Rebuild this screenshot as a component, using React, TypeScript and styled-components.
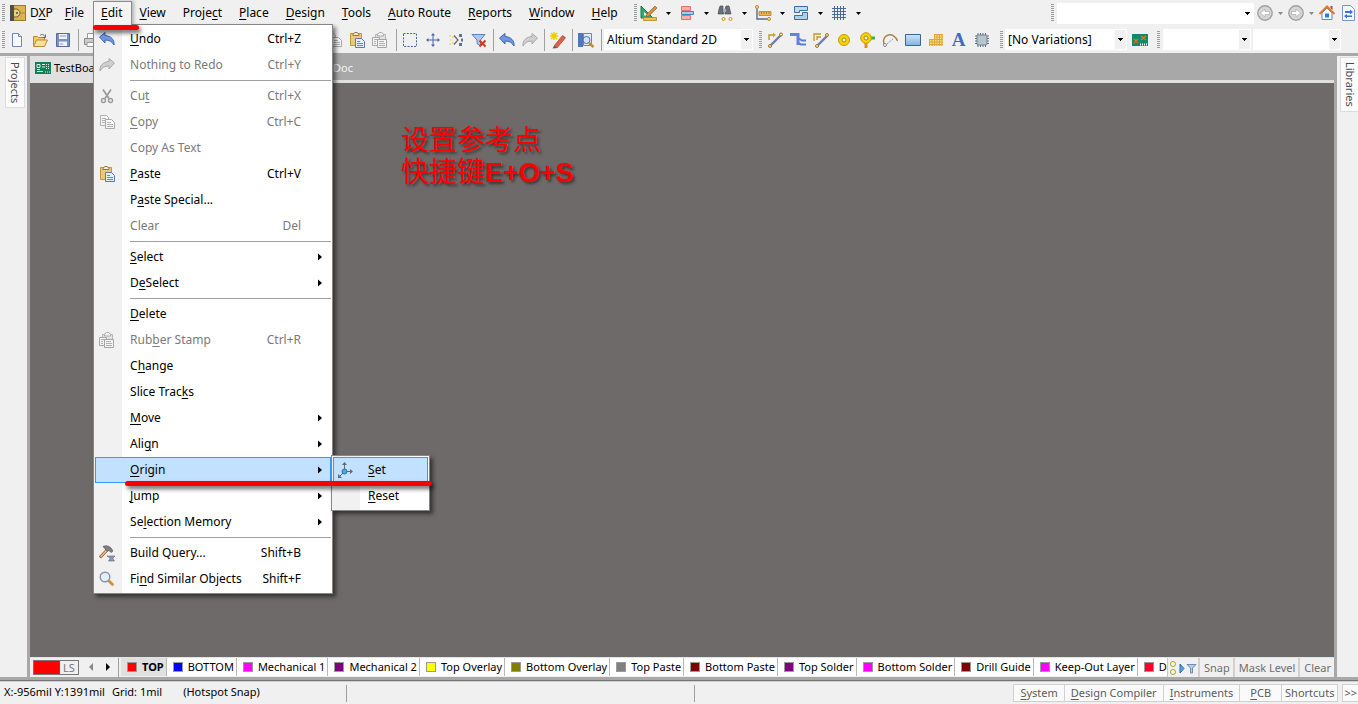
import React from 'react';
import styled, { createGlobalStyle, css } from 'styled-components';

const Global = createGlobalStyle`
  *, *::before, *::after { box-sizing: border-box; }
  html, body { margin: 0; padding: 0; }
  body { font-family: "Noto Sans", "Noto Sans CJK SC", sans-serif; font-size: 12px; line-height: 16px; color: #000; background: #f0f0f0; overflow: hidden; }
  button, input, select { font: inherit; color: inherit; margin: 0; padding: 0; border: 0; background: none; border-radius: 0; outline: 0; }
  ul { list-style: none; margin: 0; padding: 0; }
  u { text-underline-offset: 2px; text-decoration-thickness: 1px; }
`;

/* ---------- shell ---------- */

const Shell = styled.div`
  display: flex;
  flex-direction: column;
  min-height: 100vh;
  background: #f0f0f0;
`;

const Bar = styled.div<{ $h: number }>`
  display: flex;
  align-items: center;
  height: ${p => p.$h}px;
  flex: none;
  white-space: nowrap;
`;

const Grip = styled.span<{ $left?: number; $right?: number }>`
  flex: none;
  width: 3px;
  height: 18px;
  margin-left: ${p => p.$left ?? 0}px;
  margin-right: ${p => p.$right ?? 0}px;
  background: repeating-linear-gradient(#9c9c9c 0 1px, #f0f0f0 1px 2px);
`;

const Spacer = styled.span`
  flex: 1;
`;

const Divider = styled.span<{ $left?: number; $right?: number }>`
  flex: none;
  width: 1px;
  height: 22px;
  margin-left: ${p => p.$left ?? 5}px;
  margin-right: ${p => p.$right ?? 4}px;
  background: #a0a0a0;
`;

const IconButton = styled.button<{ $w?: number }>`
  flex: none;
  display: flex;
  align-items: center;
  justify-content: center;
  width: ${p => p.$w ?? 23}px;
  height: 22px;
`;

const ArrowButton = styled(IconButton)`
  width: 15px;
`;

const Svg = styled.svg`
  flex: none;
  display: block;
  width: 16px;
  height: 16px;
  overflow: visible;
`;

/* ---------- menu bar ---------- */

const MenuList = styled.ul`
  display: flex;
`;

const MenuEntry = styled.li`
  position: relative;
`;

const MenuButton = styled.button<{ $open?: boolean; $tight?: boolean }>`
  height: 24px;
  padding: 0 8px 2px 7px;
  border: 1px solid transparent;
  border-bottom: 0;
  ${p => p.$tight && css`padding-left: 3px; padding-right: 3px;`}
  ${p => p.$open && css`
    position: relative;
    z-index: 3;
    border-color: #8c8c8c;
    background: #f4f4f4;
    box-shadow: 2px 0 3px rgba(0, 0, 0, 0.25);
  `}
`;

const Popup = styled.ul<{ $w: number }>`
  position: absolute;
  z-index: 2;
  width: ${p => p.$w}px;
  padding: 1px;
  border: 1px solid #868686;
  background: linear-gradient(to right, #f1f1f1 28px, #fff 28px);
  box-shadow: 3px 3px 4px rgba(0, 0, 0, 0.5);
`;

const EditPopup = styled(Popup)`
  top: 23px;
  left: 0;
`;

const SubPopup = styled(Popup)`
  top: -2px;
  left: 236px;
`;

const ItemRow = styled.li`
  position: relative;
`;

const ItemButton = styled.button<{ $on?: boolean; $dim?: boolean }>`
  display: grid;
  grid-template-columns: 24px 1fr auto 8px;
  align-items: center;
  width: 100%;
  height: 26px;
  padding: 0 4px 0 3px;
  border: 1px solid ${p => (p.$on ? '#3399ff' : 'transparent')};
  background: ${p => (p.$on ? '#c2e0ff' : 'transparent')};
  color: ${p => (p.$dim ? '#7a7a7a' : '#000')};
  text-align: left;
  white-space: nowrap;
`;

const ItemText = styled.span`
  padding-left: 7px;
`;

const Shortcut = styled.span`
  padding-right: 17px;
`;

const Rule = styled.li`
  height: 5px;
  padding: 2px 0 0 35px;
  &::before { content: ''; display: block; height: 1px; background: #a0a0a0; }
`;

const Stroke = styled.span`
  position: absolute;
  z-index: 5;
  height: 5px;
  border-radius: 3px;
  background: #f60000;
  box-shadow: 2px 3px 4px rgba(0, 0, 0, 0.6);
`;

const EditStroke = styled(Stroke)`
  left: 0;
  top: 24px;
  width: 46px;
`;

const OriginStroke = styled(Stroke)`
  left: 30px;
  top: 24px;
  width: 307px;
`;

/* ---------- combos ---------- */

const Combo = styled.span<{ $w: number; $right?: number; $plain?: boolean }>`
  flex: none;
  display: flex;
  width: ${p => p.$w}px;
  height: 21px;
  margin-right: ${p => p.$right ?? 0}px;
  border: 1px solid #fff;
  background: #fff;
  select, input {
    flex: 1;
    min-width: 0;
    padding-left: 2px;
    appearance: none;
  }
  svg {
    width: 11px;
    height: 19px;
    background: ${p => (p.$plain ? '#fff' : '#f0f0f0')};
  }
`;

/* ---------- workspace ---------- */

const Workspace = styled.main`
  flex: 1;
  display: flex;
  padding: 3px 0;
  background: #a8a8a8;
  border-bottom: 1px solid #757575;
`;

const SidePanel = styled.aside<{ $side: 'left' | 'right' }>`
  flex: none;
  width: ${p => (p.$side === 'left' ? 27 : 21)}px;
  margin: ${p => (p.$side === 'left' ? '0 3px 0 0' : '0 0 0 3px')};
  padding: 1px 0 0 ${p => (p.$side === 'left' ? 5 : 3)}px;
  background: #f0f0f0;
`;

const SideTab = styled.button`
  width: 20px;
  padding: 4px 0;
  border: 1px solid #dcdcdc;
  background: #fcfcfc;
  color: #4a4a55;
  font-size: 11px;
  line-height: 16px;
  writing-mode: vertical-rl;
`;

const DocArea = styled.div`
  flex: 1;
  min-width: 0;
  display: flex;
  flex-direction: column;
`;

const DocTabs = styled.div`
  display: flex;
  height: 27px;
  border-bottom: 3px solid #e0e0e0;
  font-size: 11px;
`;

const DocTab = styled.button<{ $active?: boolean }>`
  display: flex;
  align-items: center;
  gap: 3px;
  padding: 0 5px;
  width: ${p => (p.$active ? 150 : 178)}px;
  justify-content: ${p => (p.$active ? 'flex-start' : 'flex-end')};
  background: ${p => (p.$active ? '#e0e0e0' : 'transparent')};
  color: ${p => (p.$active ? '#000' : '#f4f4f4')};
`;

const Canvas = styled.section`
  flex: 1;
  padding: 39px 0 0 371px;
  background: #6e6a69;
`;

const Note = styled.p`
  margin: 0;
  color: #ff0000;
  font-family: "Noto Sans CJK SC", sans-serif;
  font-size: 28px;
  line-height: 32px;
  text-shadow: 2px 2px 3px rgba(0, 0, 0, 0.5);
  strong { font-family: "Liberation Sans", sans-serif; font-size: 27px; }
`;

/* ---------- layer bar ---------- */

const LayerBar = styled.div`
  display: flex;
  height: 20px;
  border-top: 1px solid #e4e4e4;
  background: #f0f0f0;
  font-size: 11px;
  white-space: nowrap;
`;

const LayerSet = styled.button`
  display: flex;
  flex: none;
  width: 46px;
  height: 15px;
  margin: 2px 7px 0 3px;
  border: 1px solid #777;
  color: #777;
  line-height: 14px;
`;

const LayerSetColor = styled.span`
  width: 26px;
  height: 13px;
  background: #ff0000;
  border-right: 1px solid #555;
`;

const LayerSetName = styled.span`
  flex: 1;
  text-align: center;
`;

const LayerTabs = styled.div`
  flex: 1 1 0;
  min-width: 0;
  display: flex;
  overflow: hidden;
  margin-left: 2px;
  border-left: 1px solid #a0a0a0;
  padding-left: 2px;
`;

const LayerTab = styled.button<{ $active?: boolean }>`
  flex: none;
  display: flex;
  align-items: center;
  gap: 5px;
  height: 18px;
  padding: 0 2px 0 6px;
  border-right: 1px solid #b8b8b8;
  background: ${p => (p.$active ? '#e0e0e0' : '#fff')};
  font-weight: ${p => (p.$active ? 700 : 400)};
  &:last-child { flex: 1; border-right: 0; }
`;

const Swatch = styled.i<{ $c: string }>`
  width: 10px;
  height: 10px;
  border: 1px solid #9a9a9a;
  background: ${p => p.$c};
`;

const LayerAction = styled.button`
  flex: none;
  padding: 0 3px 0 4px;
  height: 19px;
  border-left: 2px solid #d4d0cc;
  color: #6e6e6e;
`;

const LayerTools = styled.div`
  flex: none;
  display: flex;
  align-items: center;
  width: 31px;
  border-left: 1px solid #c8c8c8;
`;

/* ---------- status bar ---------- */

const Status = styled.footer`
  flex: none;
  display: flex;
  align-items: center;
  height: 23px;
  padding-left: 4px;
  border-top: 1px solid #d0d0d0;
  font-size: 11px;
  white-space: nowrap;
  overflow: hidden;
`;

const StatusCell = styled.div<{ $w: number }>`
  flex: none;
  display: flex;
  align-items: center;
  width: ${p => p.$w}px;
  height: 17px;
  padding-bottom: 2px;
  border-right: 1px solid #a0a0a0;
`;

const StatusText = styled.span<{ $gap: number }>`
  margin-right: ${p => p.$gap}px;
`;

const PanelButton = styled.button<{ $pad?: number; $right?: number }>`
  flex: none;
  height: 18px;
  padding: 0 ${p => p.$pad ?? 6}px;
  margin-left: -1px;
  margin-right: ${p => p.$right ?? 0}px;
  border: 1px solid #d0d0d0;
  background: #fafafa;
  color: #5c5c5c;
`;

/* ---------- icons ---------- */

const Down = () => (
  <Svg viewBox="0 0 11 19"><path d="M3 8h5v1h-1v1h-1v1h-1v-1h-1v-1h-1z" /></Svg>
);
const DropGlyph = styled.svg`display: block; width: 5px; height: 3px;`;
const Drop = ({ c = '#000' }: { c?: string }) => (
  <DropGlyph viewBox="0 0 5 3"><path d="M0 0h5L2.500 3z" fill={c} /></DropGlyph>
);

const I: Record<string, React.ReactNode> = {
  dxp: <><rect x=".5" y=".5" width="15" height="15" fill="#dcb44e" stroke="#9a7a2c" /><path d="M0 0h4v16H0z" fill="#514c46" /><path d="M4 4h3l3 2.500v3L7 12H4" fill="#e9cf86" stroke="#6a5d40" /><circle cx="7" cy="8" r="1" fill="#514c46" /><path d="M10 8h6" stroke="#a98630" /></>,
  blank: <><path d="M3.500 1.500h6l3 3v10h-9z" fill="#f8fbff" stroke="#7088b4" /><path d="M9.500 1.500v3h3" fill="#d4e0f4" stroke="#7088b4" /></>,
  open: <><path d="M1.500 14V4.500h4l1 1h6V8" fill="#f2c869" stroke="#b98a3a" /><path d="M1.500 14.500L4.500 8h11l-3 6.500z" fill="#fbdf98" stroke="#b98a3a" /><path d="M8 3.500c2-2 4-1 4.500 1M13.500 2.500v3h-3" fill="none" stroke="#666" /></>,
  save: <><path d="M1.500 1.500h13v13h-13z" fill="#7d8fc9" stroke="#5a68a4" /><path d="M4 2h8v5H4zM4 9.500h8V14H4z" fill="#eef2fc" /><path d="M5 4h6M5 12h3" stroke="#8a96c4" /></>,
  print: <><path d="M4.500 6V1.500h7V6" fill="#fff" stroke="#999" /><path d="M1.500 6.500h13v6h-13z" fill="#ccc" stroke="#888" /><path d="M4 10.500h8v4H4z" fill="#fff" stroke="#999" /></>,
  copy: <><path d="M1.500 1.500h6l2 2v8h-8z" fill="#f4f4f4" stroke="#b0b0b0" /><path d="M3 4.500h4M3 6.500h4M3 8.500h3" stroke="#b0b0b0" /><path d="M6.500 5.500h6l3 3v6h-9z" fill="#f8f8f8" stroke="#a8a8a8" /><path d="M8 8.500h4M8 10.500h6M8 12.500h6" stroke="#b0b0b0" /></>,
  paste: <><path d="M1.500 1.500h11v12h-11z" fill="#edc879" stroke="#bf953f" /><path d="M4 3.500V2l2-1.500h2L10 2v1.500z" fill="#f5eec8" stroke="#8d7a45" /><path d="M6.500 6.500h6l3 3v6h-9z" fill="#e4eefb" stroke="#6078b0" /><path d="M8 9.500h3M8 11.500h6M8 13.500h6" stroke="#6a86c4" /></>,
  pasteGray: <><path d="M3.500 2.500h10v11h-10z" fill="#e2e2e2" stroke="#b4b4b4" /><path d="M5.500 4V2l2-1.500h2l2 1.500v2z" fill="#f4f4f4" stroke="#aaa" /><path d="M.5 5.500h7v8h-7z" fill="#f2f2f2" stroke="#a8a8a8" /><path d="M5.500 7.500h9v8h-9z" fill="#f4f4f4" stroke="#a4a4a4" /><path d="M7 9.500h5M7 11.500h6M7 13.500h6M2 7.500h4M2 9.500h2M2 11.500h2" stroke="#b0b0b0" /></>,
  select: <path d="M1.500 1.500h13v13h-13z" fill="none" stroke="#4a62a8" strokeDasharray="2 1.300" />,
  move: <><path d="M8 2v12M2 8h12" stroke="#4f66a6" /><path d="M8 1L6 3.500h4zM8 15l-2-2.500h4zM1 8l2.500-2v4zM15 8l-2.500-2v4z" fill="#4f66a6" /></>,
  deselect: <><path d="M1 3h2v2H1zM4 4h2v2H4zM1 11h2v2H1zM4 10h2v2H4zM2 7h2v2H2z" fill="#ece28c" /><path d="M6 3.500l4 4.500-4 4.500" fill="none" stroke="#6b6b6b" strokeWidth="1.300" /><path d="M11 2h3v3h-3zM13 6.500h2v3h-2zM11 11h3v3h-3z" fill="#5d7291" /></>,
  filter: <><path d="M1 2.500h13L9.500 8v6L6 11.500V8z" fill="#a9c8ee" stroke="#5f83b8" /><path d="M8.500 8.500l6 6M14.500 8.500l-6 6" stroke="#cc3a2b" strokeWidth="2" /></>,
  undo: <path d="M.5 6l5.500-4.500v3C12 5 15.500 8.500 15 14c-2-3.500-4.500-5-9-5v3z" fill="#6f97e2" stroke="#3f63ae" />,
  redo: <path d="M15.500 6L10 1.500v3C4 5 .5 8.500 1 14c2-3.500 4.500-5 9-5v3z" fill="#cfcfcf" stroke="#a8a8a8" />,
  wand: <><path d="M4 14L12.500 3.500l3 2.200L7 16z" fill="#e0604e" stroke="#a33b30" strokeWidth=".7" /><path d="M4 14l-1.500 2.500L7 16z" fill="#555" /><path d="M4 0v8M0 4h8M1 1l6 6M7 1L1 7" stroke="#ecd000" strokeWidth="1.500" /></>,
  browse: <><path d="M0 1h5v14H0z" fill="#4f78b8" /><path d="M5.500 1.500h8v12h-8z" fill="#e2e9f2" stroke="#6f86a8" /><circle cx="8.500" cy="8" r="3.500" fill="#cfe4f6" stroke="#5c6f88" /><path d="M11 11l4.500 4" stroke="#c58b34" strokeWidth="2.400" /></>,
  design: <><path d="M0 1v12h12z" fill="#2ea772" stroke="#16794d" /><path d="M3 7v3.500h4z" fill="#f0f0f0" /><path d="M6 9L14 1l2 2-8 8-3 1z" fill="#d98e3c" stroke="#8a5520" strokeWidth=".6" /><path d="M2.500 12.500h13v3h-13z" fill="#f2c04a" stroke="#b98424" strokeWidth=".8" /></>,
  align: <><path d="M2.500 1.500h9v4h-9zM2.500 10.500h9v4h-9z" fill="#f6b0ac" stroke="#e0706a" /><path d="M2.500 6.500h12v3h-12z" fill="#9fcdf0" stroke="#4588be" /></>,
  find: <><path d="M3 1h3v4l1 4H1l1-5zM9 1h3l1 4 1 4H8V4z" fill="#66707a" stroke="#444" strokeWidth=".6" /><path d="M6 4h3v3H6z" fill="#aab" /><circle cx="6.500" cy="14" r="1.500" fill="#fff" stroke="#c89020" /><circle cx="13.500" cy="14" r="1.500" fill="#fff" stroke="#c89020" /></>,
  measure: <><path d="M2 3v11h11" fill="none" stroke="#596a92" strokeWidth="1.400" /><path d="M4 6.500h12v4H4z" fill="#f1b64c" stroke="#ba7f1c" strokeWidth=".8" /><path d="M6.500 7v2M9 7v2M11.500 7v2M14 7v2" stroke="#9a6a18" strokeWidth=".8" /><circle cx="2" cy="2" r="1.500" fill="#f5e3a8" stroke="#b78a28" /><circle cx="14" cy="14" r="1.500" fill="#f5e3a8" stroke="#b78a28" /></>,
  room: <><path d="M1.500 1.500h13v4h-8v2h-5z" fill="#b9dcf2" stroke="#3c6f9e" /><path d="M14.500 7.500v7h-13v-4h8v-3z" fill="#a9d2ee" stroke="#3c6f9e" /></>,
  grid: <path d="M3.500 1v14M6.500 1v14M9.500 1v14M12.500 1v14M1 3.500h14M1 6.500h14M1 9.500h14M1 12.500h14" stroke="#49699a" fill="none" />,
  track: <><path d="M3 14L14 3" stroke="#6d7db0" strokeWidth="2.400" /><path d="M2 8V3h5" stroke="#c9951d" fill="none" strokeWidth="1.400" /><path d="M6 .5L9 3 6 5.500z" fill="#d9a520" /><circle cx="3" cy="14" r="1.500" fill="#f5e3a8" stroke="#9a7a28" /><circle cx="14" cy="2.500" r="1.500" fill="#f5e3a8" stroke="#9a7a28" /></>,
  multi: <><path d="M0 2.500h8V13" fill="none" stroke="#5b86dc" strokeWidth="3" /><path d="M8 6l4 2.500h4M8 11l3 1.500h5" fill="none" stroke="#5b7fd0" strokeWidth="2" /></>,
  diff: <><path d="M4 14L14 4" stroke="#6d7db0" strokeWidth="2.400" /><path d="M1 9V2h7M4 8V5h4" stroke="#c9951d" fill="none" strokeWidth="1.300" /><circle cx="4" cy="14" r="1.500" fill="#f5e3a8" stroke="#9a7a28" /><circle cx="14" cy="3" r="1.500" fill="#f5e3a8" stroke="#9a7a28" /></>,
  pad: <><circle cx="8" cy="8" r="5.500" fill="#f5d400" stroke="#c79a00" /><circle cx="8" cy="8" r="2" fill="#eef4f8" stroke="#a88a00" /></>,
  via: <><path d="M5.500 8h3v8h-3z" fill="#e48d28" /><path d="M9 4.500h7v3H9z" fill="#3fae3a" /><circle cx="7" cy="6" r="5.300" fill="#f5d400" stroke="#c79a00" /><circle cx="7" cy="6" r="2" fill="#eef4f8" stroke="#a88a00" /></>,
  arc: <><path d="M2 12C-1 2 12-1 15.500 9" fill="none" stroke="#a8814a" strokeWidth="1.400" /><path d="M5 12l6-5" stroke="#8b97b5" strokeDasharray="2 1" /><circle cx="3" cy="13" r="1.500" fill="#fff" stroke="#888" /></>,
  fill: <><defs><linearGradient id="fillg" x2="0" y2="1"><stop stopColor="#cfe6f7" /><stop offset="1" stopColor="#7fb4dc" /></linearGradient></defs><path d="M.5 2.500h15v11H.5z" fill="url(#fillg)" stroke="#3b668f" /></>,
  polygon: <><path d="M6 2h9v12H1V7h5z" fill="#f8dc8c" /><path d="M1 7.500h14M1 10h14M1 12.500h14M6 2.500h9M6 5h9M1.500 7v7M4 7v7M6.500 2v12M9 2v12M11.500 2v12M14 2v12" stroke="#dca83a" /></>,
  chip: <><path d="M4 1v14M6.500 1v14M9 1v14M11.500 1v14M1 4h14M1 6.500h14M1 9h14M1 11.500h14" stroke="#5e7496" /><rect x="3" y="3" width="10" height="10" rx="1" fill="#b9c3cc" stroke="#6d7f94" /></>,
  board: <><path d="M0 2h16v12H0z" fill="#16866a" /><path d="M2 7l4 4M6 7l-4 4M9 4l5 4M14 4L9 8" stroke="#e8741e" strokeWidth="1.400" /><path d="M8 12.500h7" stroke="#fff" strokeWidth="2" strokeDasharray="1 1" /></>,
  back: <><circle cx="8" cy="8" r="7.200" fill="#d6d6d6" stroke="#a2a2a2" strokeWidth="1.400" /><path d="M3.500 8L8 4v2.500h4.500v3H8V12z" fill="#fff" stroke="#aaa" strokeWidth=".7" /></>,
  forward: <><circle cx="8" cy="8" r="7.200" fill="#d6d6d6" stroke="#a2a2a2" strokeWidth="1.400" /><path d="M12.500 8L8 4v2.500H3.500v3H8V12z" fill="#fff" stroke="#aaa" strokeWidth=".7" /></>,
  home: <><path d="M3 8v6.500h10V8L8 3z" fill="#fdfdfd" stroke="#5f86c0" /><path d="M.5 9L8 1.500 15.500 9" fill="none" stroke="#e07a2c" strokeWidth="2" /><path d="M11.500 1h2v4l-2-2z" fill="#b5472a" /><path d="M6 8.500h4v4H6z" fill="#2f78e0" /></>,
  page: <><path d="M2.500.500h8l4 4v11h-12z" fill="#f4f8ff" stroke="#7d95c4" /><path d="M5 6h5V4.500L13 7l-3 2.500V8H5zM12 12H7v1.500L4 11l3-2v1.500h5z" fill="#3c74d6" /></>,
  cut: <><path d="M4 1.500l6 9M12 1.500l-6 9" stroke="#9a9a9a" strokeWidth="1.700" /><circle cx="4.500" cy="12.500" r="2" fill="none" stroke="#9a9a9a" strokeWidth="1.400" /><circle cx="11.500" cy="12.500" r="2" fill="none" stroke="#9a9a9a" strokeWidth="1.400" /></>,
  origin: <><path d="M7.500 8V2M8 9.500h7M7 10l-5 5" stroke="#686868" fill="none" /><path d="M7.500 0L5 3h5zM16 9.500L13 7v5zM1 16v-4l4 4z" fill="#686868" /><circle cx="7.500" cy="9.500" r="2.500" fill="#4aa8e8" stroke="#2b6fae" /></>,
  hammer: <><path d="M1 12.500L8 5" stroke="#8a5a2a" strokeWidth="3" /><path d="M1.500 12L8 5" stroke="#eebb84" strokeWidth="1.600" /><path d="M4 1.500c3-1.500 6-.5 8 1.500l2 3-2 1.500-2-2-2 .5z" fill="#808080" stroke="#4a4a4a" strokeWidth=".6" /><path d="M8 11h8l-2 2v1l1.500 2h-6l1.500-2v-1z" fill="#8f97b5" stroke="#5d6480" strokeWidth=".6" /></>,
  lens: <><path d="M9.500 9.500L13.500 13.500" stroke="#d58f3a" strokeWidth="2.800" strokeLinecap="round" /><circle cx="6" cy="6" r="4.800" fill="#e2f0fb" stroke="#8794a8" strokeWidth="1.400" /></>,
  pcb: <><path d="M0 2h16v12H0z" fill="#0f8055" /><path d="M2 4.500h3v3H2zM2 9.500h3M7 4.500h3M7 7h3M2 11.500h6" stroke="#d8f4e4" fill="none" /><path d="M11.500 4v5M13.500 4v5M10 12h5" stroke="#d8f4e4" strokeDasharray="1 1" /></>,
};

const Icon = ({ n }: { n: string }) => <Svg viewBox="0 0 16 16" aria-hidden="true">{I[n]}</Svg>;

const GlyphA = styled.span`
  font: bold 19px/22px "Liberation Serif", serif;
  color: #4468c4;
`;

/* Renders a caption whose accelerator key is marked by a leading "&". */
const Caption = ({ t }: { t: string }) => {
  const k = t.indexOf('&');
  if (k < 0) return <>{t}</>;
  return <>{t.slice(0, k)}<u>{t[k + 1]}</u>{t.slice(k + 2)}</>;
};

/* ---------- data ---------- */

type Item = { t: string; key?: string; icon?: string; dim?: boolean; sub?: boolean } | null;

const editItems: Item[] = [
  { t: '&Undo', key: 'Ctrl+Z', icon: 'undo' },
  { t: 'Nothing to Redo', key: 'Ctrl+Y', icon: 'redo', dim: true },
  null,
  { t: 'Cu&t', key: 'Ctrl+X', icon: 'cut', dim: true },
  { t: '&Copy', key: 'Ctrl+C', icon: 'copy', dim: true },
  { t: 'Copy As Text', dim: true },
  { t: '&Paste', key: 'Ctrl+V', icon: 'paste' },
  { t: 'P&aste Special...' },
  { t: 'Clear', key: 'Del', dim: true },
  null,
  { t: '&Select', sub: true },
  { t: 'D&eSelect', sub: true },
  null,
  { t: '&Delete' },
  { t: 'Rub&ber Stamp', key: 'Ctrl+R', icon: 'pasteGray', dim: true },
  { t: 'C&hange' },
  { t: 'Slice Trac&ks' },
  { t: '&Move', sub: true },
  { t: 'Ali&gn', sub: true },
  { t: '&Origin', sub: true },
  { t: '&Jump', sub: true },
  { t: 'Se&lection Memory', sub: true },
  null,
  { t: 'Build Query...', key: 'Shift+B', icon: 'hammer' },
  { t: 'Fi&nd Similar Objects', key: 'Shift+F', icon: 'lens' },
];

const menus = ['&File', '&Edit', '&View', 'Proje&ct', '&Place', '&Design', '&Tools', '&Auto Route', '&Reports', '&Window', '&Help'];
const utilities = ['design', 'align', 'find', 'measure', 'room', 'grid'];
const placeTools = ['track', 'multi', 'diff', 'pad', 'via', 'arc', 'fill', 'polygon'];

const layers: [string, string][] = [
  ['TOP', '#ff0000'], ['BOTTOM', '#0000ff'], ['Mechanical 1', '#ff00ff'], ['Mechanical 2', '#800080'],
  ['Top Overlay', '#ffff00'], ['Bottom Overlay', '#808000'], ['Top Paste', '#808080'], ['Bottom Paste', '#800000'],
  ['Top Solder', '#800080'], ['Bottom Solder', '#ff00ff'], ['Drill Guide', '#800000'], ['Keep-Out Layer', '#ff00ff'],
  ['D', '#ff002a'],
];

const MenuItem = ({ item }: { item: NonNullable<Item> }) => {
  const open = item.t === '&Origin';
  return (
    <ItemRow>
      <ItemButton $on={open} $dim={item.dim} disabled={item.dim}>
        {item.icon ? <Icon n={item.icon} /> : <span />}
        <ItemText><Caption t={item.t} /></ItemText>
        <Shortcut>{item.key}</Shortcut>
        {item.sub ? <Svg viewBox="0 0 16 16"><path d="M0 4.500v7l4-3.500z" /></Svg> : <span />}
      </ItemButton>
      {open && (
        <>
          <SubPopup $w={99}>
            <ItemRow><ItemButton $on><Icon n="origin" /><ItemText><Caption t="&Set" /></ItemText></ItemButton></ItemRow>
            <ItemRow><ItemButton><span /><ItemText><Caption t="&Reset" /></ItemText></ItemButton></ItemRow>
          </SubPopup>
          <OriginStroke />
        </>
      )}
    </ItemRow>
  );
};

export default function App() {
  return (
    <Shell>
      <Global />
      <Bar as="nav" $h={26}>
        <Grip $left={2} $right={5} />
        <Icon n="dxp" />
        <MenuList>
          <MenuEntry><MenuButton $tight><Caption t="D&XP" /></MenuButton></MenuEntry>
          {menus.map(m => (
            <MenuEntry key={m}>
              <MenuButton $open={m === '&Edit'}><Caption t={m} /></MenuButton>
              {m === '&Edit' && (
                <>
                  <EditPopup $w={240}>
                    {editItems.map((it, i) => (it ? <MenuItem key={i} item={it} /> : <Rule key={i} />))}
                  </EditPopup>
                  <EditStroke />
                </>
              )}
            </MenuEntry>
          ))}
        </MenuList>
        <Grip $left={7} $right={1} />
        {utilities.map(n => (
          <React.Fragment key={n}>
            <IconButton aria-label={n}><Icon n={n} /></IconButton>
            <ArrowButton aria-label={n + ' options'}><Drop /></ArrowButton>
          </React.Fragment>
        ))}
        <Spacer />
        <Grip $right={3} />
        <Combo $w={197} $plain><input aria-label="Address" /><Down /></Combo>
        <IconButton $w={22} aria-label="Back"><Icon n="back" /></IconButton>
        <IconButton $w={9} aria-label="Back history"><Drop c="#888" /></IconButton>
        <IconButton $w={22} aria-label="Forward"><Icon n="forward" /></IconButton>
        <IconButton $w={9} aria-label="Forward history"><Drop c="#888" /></IconButton>
        <IconButton $w={22} aria-label="Home"><Icon n="home" /></IconButton>
        <IconButton $w={20} aria-label="Refresh"><Icon n="page" /></IconButton>
      </Bar>

      <Bar $h={27}>
        <Grip $left={2} />
        <IconButton aria-label="New"><Icon n="blank" /></IconButton>
        <IconButton aria-label="Open"><Icon n="open" /></IconButton>
        <IconButton aria-label="Save"><Icon n="save" /></IconButton>
        <Divider $left={4} />
        <IconButton $w={16} aria-label="Print"><Icon n="print" /></IconButton>
        <Spacer />
        <IconButton aria-label="Copy"><Icon n="copy" /></IconButton>
        <IconButton aria-label="Paste"><Icon n="paste" /></IconButton>
        <IconButton aria-label="Rubber stamp"><Icon n="pasteGray" /></IconButton>
        <Divider $right={1} />
        <IconButton aria-label="Select area"><Icon n="select" /></IconButton>
        <IconButton aria-label="Move selection"><Icon n="move" /></IconButton>
        <IconButton aria-label="Deselect"><Icon n="deselect" /></IconButton>
        <IconButton aria-label="Clear filter"><Icon n="filter" /></IconButton>
        <Divider $left={3} $right={1} />
        <IconButton aria-label="Undo"><Icon n="undo" /></IconButton>
        <IconButton aria-label="Redo"><Icon n="redo" /></IconButton>
        <Divider $left={3} $right={1} />
        <IconButton aria-label="Cross probe"><Icon n="wand" /></IconButton>
        <Divider $left={3} $right={1} />
        <IconButton aria-label="Browse"><Icon n="browse" /></IconButton>
        <Divider $left={4} $right={2} />
        <Combo $w={149} $right={6}><select aria-label="View configuration"><option>Altium Standard 2D</option></select><Down /></Combo>
        <Grip $right={1} />
        {placeTools.map(n => <IconButton key={n} aria-label={n}><Icon n={n} /></IconButton>)}
        <IconButton aria-label="String"><GlyphA>A</GlyphA></IconButton>
        <IconButton aria-label="Component"><Icon n="chip" /></IconButton>
        <Grip $left={7} $right={2} />
        <Combo $w={122} $right={1}><select aria-label="Variations"><option>[No Variations]</option></select><Down /></Combo>
        <IconButton aria-label="Variant board"><Icon n="board" /></IconButton>
        <Grip $left={6} $right={3} />
        <Combo $w={88} $right={2}><select aria-label="Filter one"><option></option></select><Down /></Combo>
        <Combo $w={88} $right={17}><select aria-label="Filter two"><option></option></select><Down /></Combo>
      </Bar>

      <Workspace>
        <SidePanel $side="left"><SideTab>Projects</SideTab></SidePanel>
        <DocArea>
          <DocTabs>
            <DocTab $active><Icon n="pcb" />TestBoa</DocTab>
            <DocTab>Doc</DocTab>
          </DocTabs>
          <Canvas>
            <Note>设置参考点<br />快捷键<strong>E+O+S</strong></Note>
          </Canvas>
          <LayerBar>
            <LayerSet><LayerSetColor /><LayerSetName>LS</LayerSetName></LayerSet>
            <IconButton $w={12} aria-label="Previous layer"><Svg viewBox="0 0 16 16"><path d="M9 2v8L5 6z" fill="#888" /></Svg></IconButton>
            <IconButton $w={18} aria-label="Next layer"><Svg viewBox="0 0 16 16"><path d="M7 2v8l4-4z" /></Svg></IconButton>
            <LayerTabs>
              {layers.map(([name, c], i) => (
                <LayerTab key={name} $active={i === 0}><Swatch $c={c} />{name}</LayerTab>
              ))}
            </LayerTabs>
            <LayerTools>
              <Svg viewBox="0 0 16 16"><circle cx="5" cy="4" r="2.500" fill="#fafad0" stroke="#a8a030" /><circle cx="5" cy="12" r="2.500" fill="#fafad0" stroke="#a8a030" /><path d="M12 4v9l4-4.500z" fill="#58a8e8" stroke="#2468b0" /></Svg>
              <Svg viewBox="0 0 16 16"><path d="M3 4.500h9L8.500 8v5h-2V8z" fill="#b4cff0" stroke="#6c8cb8" /></Svg>
            </LayerTools>
            <LayerAction>Snap</LayerAction>
            <LayerAction>Mask Level</LayerAction>
            <LayerAction>Clear</LayerAction>
          </LayerBar>
        </DocArea>
        <SidePanel $side="right"><SideTab>Libraries</SideTab></SidePanel>
      </Workspace>

      <Status>
        <StatusCell $w={343}>
          <StatusText $gap={7}>X:-956mil Y:1391mil</StatusText>
          <StatusText $gap={21}>Grid: 1mil</StatusText>
          <StatusText $gap={0}>(Hotspot Snap)</StatusText>
        </StatusCell>
        <StatusCell $w={348} />
        <Spacer />
        <PanelButton><Caption t="&System" /></PanelButton>
        <PanelButton><Caption t="&Design Compiler" /></PanelButton>
        <PanelButton><Caption t="&Instruments" /></PanelButton>
        <PanelButton $pad={10}><Caption t="&PCB" /></PanelButton>
        <PanelButton $pad={3} $right={5}>Shortcuts</PanelButton>
        <PanelButton $pad={1} $right={-1}>&gt;&gt;</PanelButton>
      </Status>
    </Shell>
  );
}
